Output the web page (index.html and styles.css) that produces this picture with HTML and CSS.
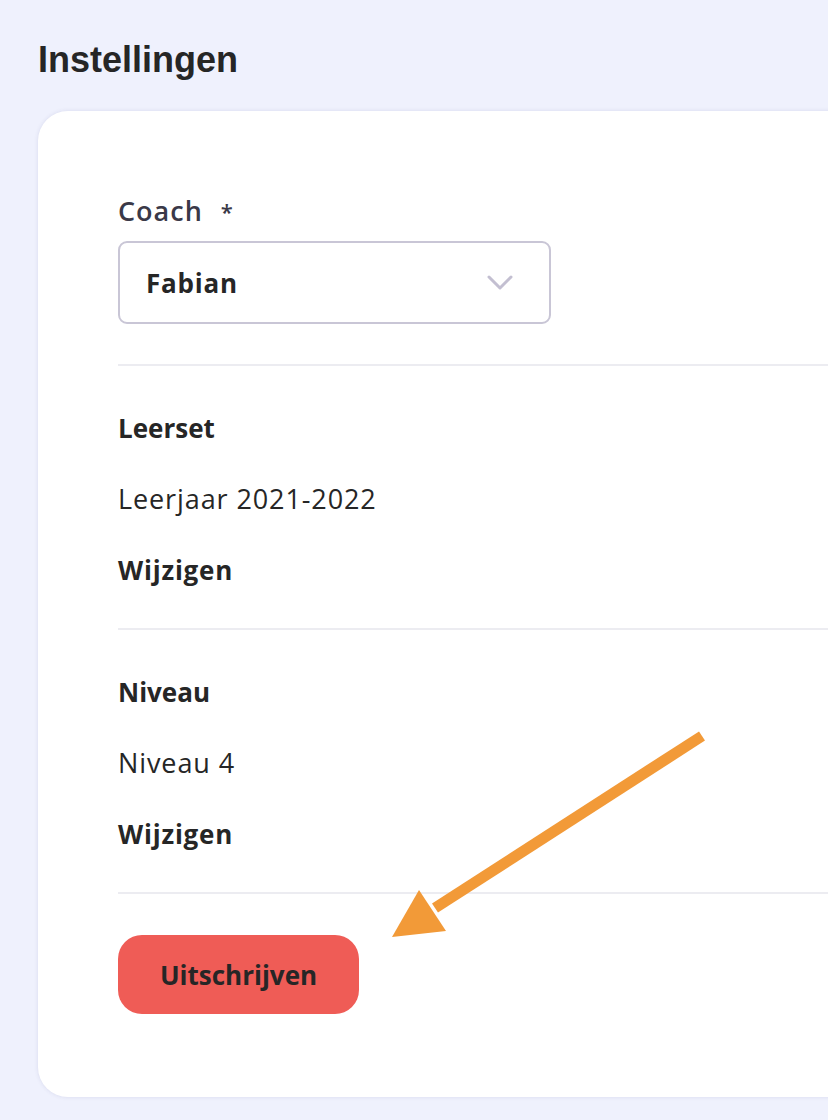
FILE: index.html
```html
<!DOCTYPE html>
<html lang="nl">
<head>
  <meta charset="UTF-8">
  <meta name="viewport" content="width=device-width, initial-scale=1.0">
  <title>Instellingen</title>
  <link rel="stylesheet" href="styles.css">
</head>
<body>

  <div class="page">
    <h1>Instellingen</h1>

    <div class="card">
      <!-- Coach -->
      <div class="field">
        <label class="field-label" for="coach">Coach <span class="required">*</span></label>
        <div class="select" id="coach">
          <span class="select-value">Fabian</span>
          <svg class="select-chevron" width="26" height="16" viewBox="0 0 26 16">
            <path d="M2 2 L13 13 L24 2" fill="none" stroke="#c3bfd1" stroke-width="3" stroke-linecap="round" stroke-linejoin="round"/>
          </svg>
        </div>
      </div>

      <!-- Leerset -->
      <div class="section">
        <div class="section-title">Leerset</div>
        <div class="section-value">Leerjaar 2021-2022</div>
        <a class="section-link" href="#">Wijzigen</a>
      </div>

      <!-- Niveau -->
      <div class="section">
        <div class="section-title">Niveau</div>
        <div class="section-value">Niveau 4</div>
        <a class="section-link" href="#">Wijzigen</a>
      </div>

      <div class="actions">
        <button class="unsubscribe-btn">Uitschrijven</button>
      </div>

      <!-- Annotation arrow -->
      <svg class="annotation" width="340" height="230" viewBox="0 0 340 230">
        <line x1="322" y1="16" x2="55" y2="188" stroke="#f29a38" stroke-width="11"/>
        <polygon points="39,170 12,217 66,211" fill="#f29a38"/>
      </svg>
    </div>
  </div>

</body>
</html>
```

FILE: styles.css
```css
/* Global Styles */
body {
  font-family: 'Open Sans', 'Noto Sans', sans-serif;
  background-color: #eff1fd;
  color: #262626;
  margin: 0;
  padding: 0;
}

.page {
  width: 828px;
  height: 1120px;
  overflow: hidden;
  padding: 40px 0 0 38px;
  box-sizing: border-box;
}

h1 {
  font-family: 'Liberation Sans', Arial, sans-serif;
  font-size: 36px;
  line-height: 40px;
  font-weight: 700;
  color: #262626;
  margin: 0 0 31px 0;
}

/* Card */
.card {
  position: relative;
  width: 900px;
  background-color: #ffffff;
  border-radius: 30px;
  padding: 84px 0 83px 80px;
  box-sizing: border-box;
  box-shadow: 0 0 4px rgba(60, 60, 120, 0.12);
}

/* Coach field */
.field {
  padding-bottom: 40px;
  border-bottom: 2px solid #ececf1;
}

.field-label {
  display: block;
  font-size: 27px;
  line-height: 32px;
  font-weight: 600;
  letter-spacing: 1px;
  color: #3a3948;
  margin-bottom: 14px;
}

.required {
  margin-left: 10px;
  vertical-align: top;
  font-size: 22px;
}

.select {
  width: 433px;
  height: 83px;
  box-sizing: border-box;
  border: 2px solid #c9c6d6;
  border-radius: 9px;
  display: flex;
  align-items: center;
  justify-content: space-between;
  padding: 0 36px 0 26px;
}

.select-value {
  font-size: 26px;
  font-weight: 700;
  letter-spacing: 0.8px;
  color: #262626;
}

/* Sections */
.section {
  display: flex;
  flex-direction: column;
  gap: 35px;
  padding: 44px 0 40px 0;
  border-bottom: 2px solid #ececf1;
  width: 710px;
}

.section-title,
.section-value,
.section-link {
  font-size: 26px;
  line-height: 36px;
}

.section-title {
  font-weight: 700;
}

.section-value {
  font-size: 27px;
  font-weight: 400;
  letter-spacing: 0.9px;
}

.section-link {
  font-weight: 700;
  letter-spacing: 0.8px;
  color: #262626;
  text-decoration: none;
}

/* Uitschrijven Button */
.actions {
  padding-top: 41px;
}

.unsubscribe-btn {
  font-family: inherit;
  background-color: #ef5c56;
  color: #262626;
  border: none;
  width: 241px;
  height: 79px;
  font-size: 26px;
  font-weight: 700;
  border-radius: 24px;
  cursor: pointer;
}

/* Annotation */
.annotation {
  position: absolute;
  left: 342px;
  top: 609px;
}
```
